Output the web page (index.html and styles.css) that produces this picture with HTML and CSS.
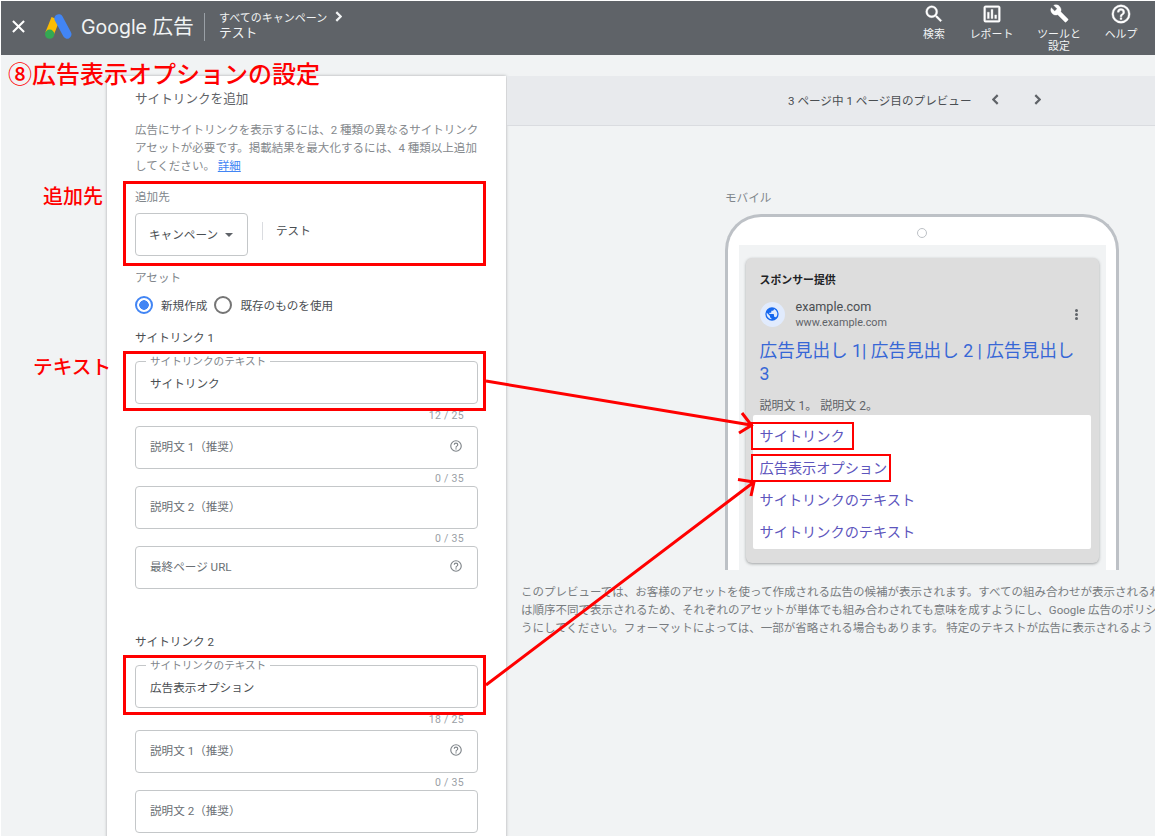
FILE: index.html
```html
<!DOCTYPE html>
<html lang="ja">
<head>
  <meta charset="UTF-8" />
  <meta name="viewport" content="width=device-width, initial-scale=1.0"/>
  <title>Google 広告</title>
  <link rel="stylesheet" href="styles.css">
</head>
<body>
  <div class="app">
    <header class="topbar">
      <svg class="close" viewBox="0 0 14 14"><path d="M1 1l12 12M13 1L1 13"/></svg>
      <svg class="logo" viewBox="0 0 26 24">
        <path d="M10.200 4.400L4.300 19.200" stroke="#fbbc04" stroke-width="8.400"/>
        <path d="M13.200 4.300L21.300 19.500" stroke="#4285f4" stroke-width="8.400" stroke-linecap="round"/>
        <circle cx="4.500" cy="19.400" r="4.500" fill="#34a853"/>
      </svg>
      <span class="brand"><span class="brand-name">Google</span> 広告</span>
      <div class="crumbs">
        <div class="crumb-parent">すべてのキャンペーン
          <svg class="chevron" viewBox="0 0 6 10"><path d="M1 1l4 4-4 4"/></svg>
        </div>
        <div class="crumb-current">テスト</div>
      </div>
      <nav class="tools">
        <div class="tool tool-search">
          <svg viewBox="0 0 24 24"><path d="M15.500 14h-.790l-.280-.270A6.470 6.470 0 0 0 16 9.500 6.500 6.500 0 1 0 9.500 16c1.610 0 3.090-.590 4.230-1.570l.270.280v.790l5 4.990L20.490 19l-4.990-5zm-6 0C7.010 14 5 11.990 5 9.500S7.010 5 9.500 5 14 7.010 14 9.500 11.990 14 9.500 14z"/></svg>
          <span>検索</span>
        </div>
        <div class="tool tool-report">
          <svg viewBox="0 0 24 24"><path d="M9 17H7v-7h2v7zm4 0h-2V7h2v10zm4 0h-2v-4h2v4zm2 2H5V5h14v14zm0-16H5a2 2 0 0 0-2 2v14a2 2 0 0 0 2 2h14a2 2 0 0 0 2-2V5a2 2 0 0 0-2-2z"/></svg>
          <span>レポート</span>
        </div>
        <div class="tool tool-settings">
          <svg viewBox="0 0 24 24"><path d="M22.700 19l-9.100-9.100c.900-2.300.400-5-1.500-6.900-2-2-5-2.400-7.400-1.300L9 6 6 9 1.600 4.700C.400 7.100.900 10.100 2.900 12.100c1.900 1.900 4.600 2.400 6.900 1.500l9.100 9.100c.400.400 1 .400 1.400 0l2.300-2.300c.500-.400.500-1.100.100-1.400z"/></svg>
          <span>ツールと<br>設定</span>
        </div>
        <div class="tool tool-help">
          <svg viewBox="0 0 24 24"><use href="#help"/></svg>
          <span>ヘルプ</span>
        </div>
      </nav>
    </header>

    <main class="content">
      <section class="panel">
        <h2 class="panel-title">サイトリンクを追加</h2>
        <p class="panel-text">広告にサイトリンクを表示するには、2 種類の異なるサイトリンク<br>アセットが必要です。掲載結果を最大化するには、4 種類以上追加<br>してください。 <a class="link">詳細</a></p>

        <div class="label">追加先</div>
        <div class="target-row">
          <div class="select">キャンペーン <span class="caret"></span></div>
          <div class="target-name">テスト</div>
        </div>

        <div class="label">アセット</div>
        <div class="radios">
          <span class="radio checked"></span><span>新規作成</span>
          <span class="radio"></span><span>既存のものを使用</span>
        </div>

        <h3 class="group-title">サイトリンク 1</h3>
        <div class="field filled"><span class="field-label">サイトリンクのテキスト</span>サイトリンク</div>
        <div class="counter counter-first">12 / 25</div>
        <div class="field">説明文 1（推奨）<svg class="help" viewBox="0 0 24 24"><use href="#help"/></svg></div>
        <div class="counter">0 / 35</div>
        <div class="field">説明文 2（推奨）</div>
        <div class="counter">0 / 35</div>
        <div class="field">最終ページ URL<svg class="help" viewBox="0 0 24 24"><use href="#help"/></svg></div>

        <h3 class="group-title group-second">サイトリンク 2</h3>
        <div class="field filled"><span class="field-label">サイトリンクのテキスト</span>広告表示オプション</div>
        <div class="counter counter-first">18 / 25</div>
        <div class="field">説明文 1（推奨）<svg class="help" viewBox="0 0 24 24"><use href="#help"/></svg></div>
        <div class="counter">0 / 35</div>
        <div class="field">説明文 2（推奨）</div>
      </section>

      <section class="preview">
        <div class="pager">
          <span class="pager-text">3 ページ中 1 ページ目のプレビュー</span>
          <svg class="chevron" viewBox="0 0 6 10"><path d="M5 1L1 5l4 4"/></svg>
          <svg class="chevron" viewBox="0 0 6 10"><path d="M1 1l4 4-4 4"/></svg>
        </div>
        <div class="device-label">モバイル</div>
        <div class="phone">
          <div class="camera"></div>
          <div class="screen">
            <div class="ad">
              <div class="sponsored">スポンサー提供</div>
              <div class="site">
                <span class="globe"><svg viewBox="0 0 24 24"><path d="M12 2a10 10 0 1 0 0 20 10 10 0 0 0 0-20zm-1 17.930A8 8 0 0 1 4.210 10.210L9 15v1a2 2 0 0 0 2 2v1.930zm6.900-2.540A2 2 0 0 0 16 16h-1v-3a1 1 0 0 0-1-1H8v-2h2a1 1 0 0 0 1-1V7h2a2 2 0 0 0 2-2v-.410a8 8 0 0 1 2.900 12.800z"/></svg></span>
                <div class="site-text">
                  <div class="site-name">example.com</div>
                  <div class="site-url">www.example.com</div>
                </div>
                <span class="more"><i></i><i></i><i></i></span>
              </div>
              <div class="headline">広告見出し 1| 広告見出し 2 | 広告見出し<br>3</div>
              <div class="ad-text">説明文 1。 説明文 2。</div>
              <div class="sitelinks">
                <div>サイトリンク</div>
                <div>広告表示オプション</div>
                <div>サイトリンクのテキスト</div>
                <div>サイトリンクのテキスト</div>
              </div>
            </div>
          </div>
        </div>
        <p class="note">このプレビューでは、お客様のアセットを使って作成される広告の候補が表示されます。すべての組み合わせが表示されるわ<br>は順序不同で表示されるため、それぞれのアセットが単体でも組み合わされても意味を成すようにし、Google 広告のポリシ<br>うにしてください。フォーマットによっては、一部が省略される場合もあります。 特定のテキストが広告に表示されるよう</p>
      </section>
    </main>
  </div>

  <!-- 説明用の赤枠と矢印 -->
  <svg class="marks" viewBox="0 0 1158 836">
    <g stroke-width="3">
      <rect x="124.500" y="182.500" width="360" height="82"/>
      <rect x="124.500" y="352.500" width="360" height="57"/>
      <rect x="124.500" y="656.500" width="360" height="57"/>
      <path d="M486 381L751 425M742 413l9.500 12.300L739 433"/>
      <path d="M486 685L754 482M738 479.500l16 2.500-3 14"/>
    </g>
    <g stroke-width="2">
      <rect x="752" y="423" width="101" height="26"/>
      <rect x="752" y="455" width="138" height="26"/>
    </g>
  </svg>
  <div class="mark-text mark-title">⑧広告表示オプションの設定</div>
  <div class="mark-text mark-target">追加先</div>
  <div class="mark-text mark-input">テキスト</div>

  <svg class="defs">
    <symbol id="help" viewBox="0 0 24 24"><path d="M11 18h2v-2h-2v2zm1-16a10 10 0 1 0 0 20 10 10 0 0 0 0-20zm0 18a8 8 0 1 1 0-16 8 8 0 0 1 0 16zm0-14a4 4 0 0 0-4 4h2a2 2 0 1 1 4 0c0 2-3 1.750-3 5h2c0-2.250 3-2.500 3-5a4 4 0 0 0-4-4z"/></symbol>
  </svg>
</body>
</html>
```
FILE: styles.css
```css
* {
  box-sizing: border-box;
}

body {
  margin: 0;
  padding: 1px 3px 0 1px;
  height: 836px;
  position: relative;
  overflow: hidden;
  background: #fff;
  color: #4a4e52;
  font-family: Roboto, "Noto Sans CJK JP", sans-serif;
  font-size: 11.600px;
}

h2, h3, p {
  margin: 0;
  font-weight: 400;
}

.app {
  height: 835px;
  overflow: hidden;
  background: #f1f3f4;
}

/* header */
.topbar {
  display: flex;
  align-items: center;
  height: 54px;
  padding: 0 0 3px 11px;
  background: #5f6368;
  color: #f1f3f4;
}

.close {
  width: 13px;
  height: 13px;
  fill: none;
  stroke: #fff;
  stroke-width: 2.200;
}

.logo {
  width: 27px;
  height: 25px;
  margin-left: 20px;
  fill: none;
}

.brand {
  width: 123px;
  margin-left: 9px;
  font-size: 20.800px;
  line-height: 28px;
  white-space: nowrap;
}

.brand-name {
  font-family: Inter, sans-serif;
  font-size: 19.500px;
}

.crumbs {
  height: 28px;
  padding-left: 14px;
  border-left: 1px solid #9aa0a6;
  font-size: 11px;
}

.crumb-parent {
  display: flex;
  align-items: center;
  gap: 8px;
  height: 16px;
  margin-top: -4px;
}

.crumb-current {
  font-size: 12.800px;
  line-height: 16px;
}

.chevron {
  width: 7px;
  height: 11px;
  fill: none;
  stroke: currentColor;
  stroke-width: 2;
}

.tools {
  display: flex;
  align-self: flex-start;
  margin-left: auto;
  padding-right: 9px;
}

.tool {
  display: flex;
  flex-direction: column;
  align-items: center;
  padding-top: 2px;
  font-size: 10.900px;
  line-height: 12px;
  text-align: center;
}

.tool svg {
  width: 22px;
  height: 22px;
  margin-bottom: 4px;
  fill: #fff;
  stroke: #fff;
  stroke-width: .4;
}

.tool-search { width: 48px; }
.tool-report { width: 67px; }
.tool-settings { width: 68px; }
.tool-help { width: 56px; margin-right: -3px; }

.tool-settings svg {
  width: 19px;
  height: 19px;
  margin: 1px 0 6px;
}

/* left form */
.content {
  display: flex;
  margin-top: 21px;
  padding-left: 106px;
}

.panel {
  flex: 0 0 399px;
  min-width: 0;
  height: 800px;
  padding: 13px 28px 0;
  background: #fff;
  box-shadow: 0 0 3px rgba(60, 64, 67, .4);
}

.panel-title {
  color: #5f6368;
  font-size: 12.600px;
  line-height: 20px;
}

.panel-text {
  margin-top: 12px;
  color: #85898d;
  font-size: 11.530px;
  line-height: 18px;
  white-space: nowrap;
}

.link {
  color: #4285f4;
  text-decoration: underline;
}

.label {
  margin-top: 13px;
  color: #80868b;
  line-height: 18px;
}

.target-row {
  display: flex;
  margin-top: 7px;
}

.select {
  display: flex;
  align-items: center;
  width: 113px;
  height: 43px;
  padding: 0 0 2px 13px;
  border: 1px solid #c4c7c9;
  border-radius: 4px;
}

.caret {
  margin: 3px 0 0 7px;
  border: 4.500px solid transparent;
  border-top-color: #5f6368;
  border-bottom: 0;
}

.target-name {
  height: 18px;
  margin: 9px 0 0 14px;
  padding-left: 13px;
  border-left: 1px solid #dadce0;
  line-height: 18px;
}

.radios {
  display: flex;
  align-items: center;
  height: 20px;
  margin-top: 8px;
}

.radio {
  width: 18px;
  height: 18px;
  margin-right: 8px;
  border: 2px solid #757575;
  border-radius: 50%;
}

.radio:not(:first-child) {
  margin-left: 7px;
}

.radio.checked {
  border-color: #4285f4;
  background: radial-gradient(circle, #4285f4 4.500px, #fff 5px);
}

.group-title {
  margin-top: 14px;
  font-size: 11.600px;
  line-height: 18px;
}

.group-second {
  margin-top: 44px;
}

.field {
  display: flex;
  align-items: center;
  position: relative;
  height: 43px;
  padding: 0 14px 3px;
  border: 1px solid #c4c7c9;
  border-radius: 4px;
  color: #6b7075;
}

.field.filled {
  margin-top: 14px;
  padding-bottom: 0;
  color: #4a4e52;
}

/* label sits over the field's top border */
.field-label {
  position: absolute;
  top: -8px;
  left: 10px;
  padding: 0 4px;
  background: #fff;
  color: #80868b;
  font-size: 10.600px;
  line-height: 16px;
}

.help {
  width: 14px;
  height: 14px;
  margin-left: auto;
  fill: #80868b;
}

.counter {
  height: 17px;
  padding-right: 14px;
  color: #9aa0a6;
  font-size: 10.500px;
  line-height: 19px;
  letter-spacing: .3px;
  text-align: right;
}

.counter-first {
  height: 22px;
  line-height: 23px;
}

/* right preview */
.preview {
  flex: 1;
  min-width: 0;
  padding-left: 1px;
  overflow: hidden;
}

.pager {
  display: flex;
  align-items: center;
  height: 50px;
  padding: 0 0 2px 281px;
  border-bottom: 1px solid #dadce0;
  background: #e8eaed;
  color: #5f6368;
}

.pager-text {
  width: 204px;
  color: #4a4e52;
  white-space: nowrap;
}

.pager .chevron + .chevron {
  margin-left: 35px;
}

.device-label {
  margin: 63px 0 0 218px;
  color: #80868b;
  line-height: 18px;
}

.phone {
  width: 394px;
  height: 356px;
  margin: 7px 0 0 218px;
  padding: 0 10.500px;
  border: 3.500px solid #bdc1c6;
  border-bottom: 0;
  border-radius: 36px 36px 0 0;
  background: #fff;
}

.camera {
  width: 10px;
  height: 10px;
  margin: 11px auto 7px;
  border: 1px solid #bdc1c6;
  border-radius: 50%;
}

.screen {
  height: 325px;
  padding: 13px 7px 0;
  background: #f1f3f4;
}

.ad {
  height: 305px;
  padding: 14px 8px 0 7px;
  border-radius: 6px;
  background: #ddd;
  box-shadow: 0 1px 3px rgba(60, 64, 67, .45);
}

.sponsored {
  padding-left: 7px;
  color: #202124;
  font-size: 10.900px;
  font-weight: 700;
  line-height: 18px;
}

.site {
  display: flex;
  align-items: center;
  height: 32px;
  margin-top: 8px;
  padding: 0 13px 0 7px;
}

.globe {
  display: flex;
  align-items: center;
  justify-content: center;
  width: 25px;
  height: 25px;
  border-radius: 50%;
  background: #e1ebfd;
}

.globe svg {
  width: 16px;
  height: 16px;
  fill: #1668ef;
}

.site-text {
  margin-left: 11px;
}

.site-name {
  color: #4a4e52;
  font-size: 12.600px;
  line-height: 16px;
}

.site-url {
  color: #5f6368;
  font-size: 10.800px;
  line-height: 15px;
}

.more {
  display: flex;
  flex-direction: column;
  gap: 1px;
  margin-left: auto;
}

.more i {
  width: 3px;
  height: 3px;
  border-radius: 50%;
  background: #5f6368;
}

.headline {
  margin-top: 10px;
  padding-left: 7px;
  color: #3767d6;
  font-size: 17.650px;
  line-height: 23px;
  white-space: nowrap;
}

.ad-text {
  margin-top: 11px;
  padding-left: 7px;
  color: #5f6368;
  font-size: 12px;
  line-height: 18px;
}

.sitelinks {
  height: 134px;
  padding: 5px 7px;
  border-radius: 2px;
  background: #fff;
  color: #5d55bd;
  font-size: 14.200px;
  line-height: 32px;
}

.note {
  margin: 14px 0 0 14px;
  color: #787c80;
  font-size: 11.500px;
  line-height: 17.800px;
  white-space: nowrap;
}

/* red annotations drawn over the screen */
.marks {
  position: absolute;
  top: 0;
  left: 0;
  width: 1158px;
  height: 836px;
  fill: none;
  stroke: #f00;
}

.mark-text {
  position: absolute;
  color: #f00;
  font-family: "Noto Sans CJK JP", sans-serif;
  font-weight: 500;
  white-space: nowrap;
}

.mark-title {
  top: 57px;
  left: 8px;
  font-size: 24px;
  line-height: 32px;
}

.mark-target {
  top: 182px;
  left: 43px;
  font-size: 20px;
  line-height: 28px;
}

.mark-input {
  top: 352px;
  left: 33px;
  font-size: 19.700px;
  line-height: 28px;
}

.defs {
  position: absolute;
  width: 0;
  height: 0;
}
```
